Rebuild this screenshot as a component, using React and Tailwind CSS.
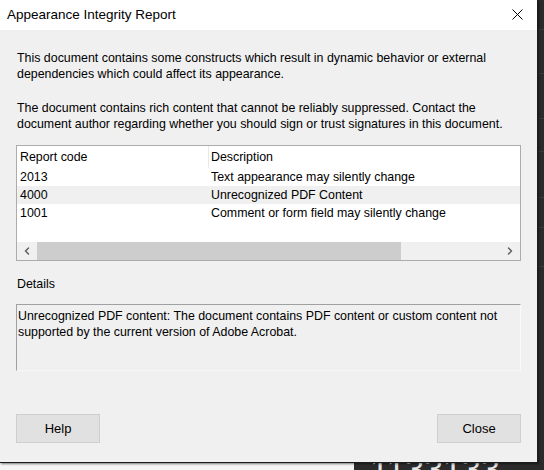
import { ChevronLeft, ChevronRight } from 'lucide-react';

const rows = [
  { code: '2013', text: 'Text appearance may silently change' },
  { code: '4000', text: 'Unrecognized PDF Content', shaded: true },
  { code: '1001', text: 'Comment or form field may silently change' },
];

const font = { fontFamily: '"Liberation Sans", Arial, sans-serif' };

function Backdrop() {
  return (
    <div className="flex h-full w-full">
      <div className="w-[354px] bg-[#f4f4f4]" />
      <div className="relative flex-1 bg-[#2b2b2b] overflow-hidden">
        <div className="flex flex-col">
          <div className="h-[30px] border-b border-[#3a3a3a]" />
          <div className="h-[44px] border-b border-[#3a3a3a]" />
          <div className="h-[45px] border-b border-[#3a3a3a]" />
          <div className="h-[33px] border-b border-[#3a3a3a]" />
          <div className="h-[46px] border-b border-[#3a3a3a]" />
          <div className="h-[30px] border-b border-[#3a3a3a]" />
          <div className="h-[39px] border-b border-[#3a3a3a]" />
        </div>
        <div className="absolute left-[16px] top-[452px] text-[34px] leading-none text-[#e6e6e6]">1133133</div>
      </div>
    </div>
  );
}

export default function App() {
  return (
    <div className="relative h-[470px] w-[544px] overflow-hidden text-black" style={font}>
      <Backdrop />

      {/* dialog window */}
      <div className="absolute left-0 top-0 flex h-[463px] w-[538px] flex-col border-r border-b border-[#1c1c1c] bg-[#f0f0f0] shadow-[1px_1px_2px_rgba(0,0,0,0.5)]">
        <div className="flex h-[30px] items-center justify-between bg-white pl-[7px] pr-[14px]">
          <span className="text-[13.5px]">Appearance Integrity Report</span>
          <svg width="11" height="11" viewBox="0 0 11 11" className="mt-[-2px]">
            <path d="M0.5 0.5 L10.5 10.5 M10.5 0.5 L0.5 10.5" stroke="#000" strokeWidth="1" fill="none" />
          </svg>
        </div>

        <div className="flex flex-1 flex-col px-[16px] text-[12.4px] leading-[16px]">
          <p className="mt-[20px] pl-px">
            This document contains some constructs which result in dynamic behavior or external dependencies which could affect its appearance.
          </p>
          <p className="mt-[18px] pl-px pr-[10px]">
            The document contains rich content that cannot be reliably suppressed. Contact the document author regarding whether you should sign or trust signatures in this document.
          </p>

          <div className="mt-[13px] flex h-[116px] flex-col border border-[#acacac] bg-white">
            <div className="flex h-[22px] items-center">
              <div className="w-[191px] pl-[3px]">Report code</div>
              <div className="h-full border-l border-[#e8e8e8]" />
              <div className="pl-[2px]">Description</div>
            </div>
            {rows.map((r) => (
              <div key={r.code} className={`flex h-[18px] items-center ${r.shaded ? 'bg-[#f0f0f0]' : ''}`}>
                <div className="w-[192px] pl-[3px]">{r.code}</div>
                <div className="pl-[2px]">{r.text}</div>
              </div>
            ))}
            <div className="flex-1" />
            <div className="flex h-[18px] items-center bg-[#f0f0f0]">
              <div className="flex w-[20px] justify-center text-[#606060]">
                <ChevronLeft size={12} strokeWidth={3} />
              </div>
              <div className="h-full w-[364px] bg-[#cdcdcd]" />
              <div className="flex-1" />
              <div className="flex w-[20px] justify-center text-[#606060]">
                <ChevronRight size={12} strokeWidth={3} />
              </div>
            </div>
          </div>

          <div className="mt-[15px] pl-px">Details</div>

          <div className="mt-[12px] h-[67px] border-t border-l border-t-[#a0a0a0] border-l-[#a0a0a0] border-r border-b border-r-[#fafafa] border-b-[#f6f6f6] pl-px pr-[20px] pt-[3px]">
            Unrecognized PDF content: The document contains PDF content or custom content not supported by the current version of Adobe Acrobat.
          </div>

          <div className="mt-[43px] flex justify-between">
            <button className="h-[29px] w-[84px] border border-[#cfcfcf] bg-[#e1e1e1] text-[13px]">Help</button>
            <button className="h-[29px] w-[84px] border border-[#cfcfcf] bg-[#e1e1e1] text-[13px]">Close</button>
          </div>
        </div>
      </div>
    </div>
  );
}
